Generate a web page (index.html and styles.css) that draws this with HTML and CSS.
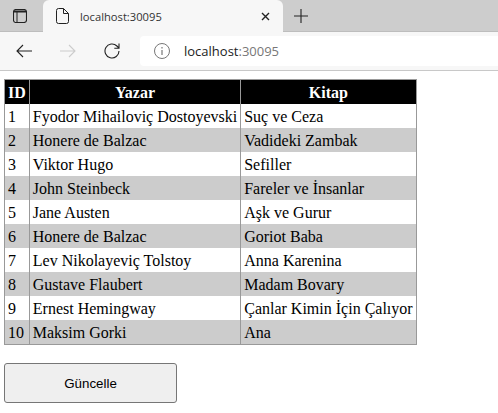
FILE: index.html
```html
<!DOCTYPE html>
<html lang="tr">
    <head>
        <meta charset="utf-8" />
        <title>localhost:30095</title>
        <link rel="stylesheet" href="styles.css">
    </head>
    <body>
        <div class="tabstrip">
            <svg class="tabs-icon" width="14" height="14" viewBox="0 0 14 14">
                <rect x="0.500" y="0.500" width="13" height="13" rx="2.500" fill="none" stroke="#222" stroke-width="1.100" />
                <path d="M1 1.500h12v2H4.500V13h-1V3.500H1z" fill="#222" />
            </svg>
            <div class="tab">
                <svg width="13" height="16" viewBox="0 0 13 16">
                    <path d="M0.500 2.500a2 2 0 0 1 2-2h5l5 5v8a2 2 0 0 1-2 2h-8a2 2 0 0 1-2-2zM7.500 0.500v5h5" fill="none" stroke="#222" stroke-width="1" />
                </svg>
                <span class="tab-title">localhost:30095</span>
                <svg class="tab-close" width="9" height="9" viewBox="0 0 9 9">
                    <path d="M1 1l7 7M8 1l-7 7" stroke="#222" stroke-width="1.400" />
                </svg>
            </div>
            <svg class="new-tab" width="14" height="14" viewBox="0 0 14 14">
                <path d="M7 0v14M0 7h14" stroke="#222" stroke-width="1.100" />
            </svg>
        </div>
        <div class="toolbar">
            <svg class="nav-icon" width="16" height="14" viewBox="0 0 16 14">
                <path d="M16 7H1M7 1L1 7l6 6" fill="none" stroke="#222" stroke-width="1.100" />
            </svg>
            <svg class="nav-icon" width="16" height="14" viewBox="0 0 16 14">
                <path d="M0 7h15M9 1l6 6-6 6" fill="none" stroke="#ccc" stroke-width="1.100" />
            </svg>
            <svg class="nav-icon reload" width="16" height="16" viewBox="0 0 16 16">
                <path d="M15 8a7 7 0 1 1-2.100-5L15 5.200M15 0.500v4.700h-4.700" fill="none" stroke="#222" stroke-width="1.100" />
            </svg>
            <div class="address">
                <svg width="16" height="16" viewBox="0 0 16 16">
                    <circle cx="8" cy="8" r="7.500" fill="none" stroke="#777" stroke-width="1" />
                    <path d="M8 7v5M8 4v1.500" stroke="#777" stroke-width="1.200" />
                </svg>
                <span class="url">localhost<span class="url-port">:30095</span></span>
            </div>
        </div>

        <div class="page">
            <table class="books">
                <tr>
                    <th>ID</th>
                    <th>Yazar</th>
                    <th>Kitap</th>
                </tr>
                <tr><td>1</td><td>Fyodor Mihailoviç Dostoyevski</td><td>Suç ve Ceza</td></tr>
                <tr><td>2</td><td>Honere de Balzac</td><td>Vadideki Zambak</td></tr>
                <tr><td>3</td><td>Viktor Hugo</td><td>Sefiller</td></tr>
                <tr><td>4</td><td>John Steinbeck</td><td>Fareler ve İnsanlar</td></tr>
                <tr><td>5</td><td>Jane Austen</td><td>Aşk ve Gurur</td></tr>
                <tr><td>6</td><td>Honere de Balzac</td><td>Goriot Baba</td></tr>
                <tr><td>7</td><td>Lev Nikolayeviç Tolstoy</td><td>Anna Karenina</td></tr>
                <tr><td>8</td><td>Gustave Flaubert</td><td>Madam Bovary</td></tr>
                <tr><td>9</td><td>Ernest Hemingway</td><td>Çanlar Kimin İçin Çalıyor</td></tr>
                <tr><td>10</td><td>Maksim Gorki</td><td>Ana</td></tr>
            </table>
            <button class="update-btn" type="button">Güncelle</button>
        </div>
    </body>
</html>
```

FILE: styles.css
```css
body {
    margin: 0;
    background-color: #fff;
    color: #000;
    font-family: "Liberation Serif", serif;
    font-size: 16px;
    overflow: hidden;
}
.tabstrip {
    display: flex;
    align-items: flex-end;
    height: 32px;
    background-color: #cdcdcd;
    box-sizing: border-box;
    border-bottom: 1px solid #bdbdbd;
}
.tabs-icon {
    margin: 0 0 8px 13px;
}
.tab {
    display: flex;
    align-items: center;
    box-sizing: border-box;
    width: 240px;
    height: 32px;
    margin: 0 0 -1px 16px;
    padding: 0 13px;
    background-color: #f7f7f7;
    border-radius: 6px 6px 0 0;
}
.tab-title {
    flex: 1;
    margin-left: 11px;
    font-family: "Open Sans", sans-serif;
    font-size: 11.200px;
    color: #333;
}
.new-tab {
    margin: 0 0 8px 11px;
}
.toolbar {
    display: flex;
    align-items: center;
    box-sizing: border-box;
    height: 39px;
    padding: 4px 0 4px 16px;
    background-color: #f7f7f7;
    border-bottom: 1px solid #c8c8c8;
}
.nav-icon {
    margin-right: 28px;
}
.nav-icon.reload {
    margin-right: 20px;
}
.address {
    display: flex;
    align-items: center;
    flex: 1;
    height: 30px;
    padding-left: 14px;
    background-color: #fff;
    border-radius: 4px 0 0 4px;
}
.url {
    margin-left: 14px;
    font-family: "Open Sans", sans-serif;
    font-size: 13px;
    color: #222;
}
.url-port {
    color: #777;
}
.page {
    padding: 8px 4px;
}
.books {
    border-collapse: collapse;
    border: 1px solid #999;
}
.books th {
    background-color: #000;
    color: #fff;
    font-weight: bold;
    padding: 4px 3px 2px;
    border-left: 1px solid #999;
    border-right: 1px solid #999;
    line-height: 18px;
}
.books td {
    padding: 4px 3px 2px;
    border-left: 1px solid #999;
    border-right: 1px solid #999;
    line-height: 18px;
}
.books tr:nth-child(odd) td {
    background-color: #ccc;
}
.update-btn {
    display: block;
    width: 173px;
    height: 40px;
    margin-top: 18px;
    background-color: #efefef;
    border: 1px solid #767676;
    border-radius: 3px;
    font-family: "Liberation Sans", sans-serif;
    font-size: 13.333px;
    color: #000;
}
```
